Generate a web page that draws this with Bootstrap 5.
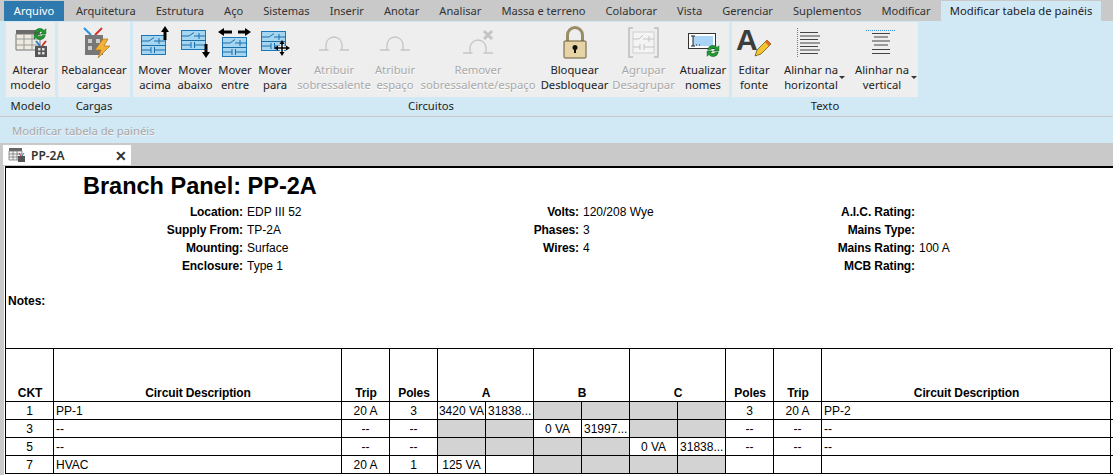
<!DOCTYPE html>
<html lang="pt">
<head>
<meta charset="utf-8">
<title>Modificar tabela de painéis</title>
<link href="https://cdn.jsdelivr.net/npm/bootstrap@5.3.0/dist/css/bootstrap.min.css" rel="stylesheet">
<style>
html,body{height:475px;overflow:hidden}
body{background:#c9c9c9;font-family:"Noto Sans","Open Sans",sans-serif;font-size:11.25px;color:#222;width:1113px}
.tabstrip{height:21px;padding:1px 0 0 4px;line-height:20px;white-space:nowrap;font-size:11.1px}
.rtab{padding:0 10px;color:#333;flex:none}
.rtab-file{background:#2e79ae;color:#fff;width:60px;text-align:center;padding:0;margin-right:2px}
.rtab-ctx{background:#d1e8f5;width:160px;padding:0;text-align:center;margin-left:auto;margin-right:12px;color:#222;font-size:11.25px}
.ribbon{height:95px;background:#d1e8f5;padding:1px 0 0 6px;gap:3px}
.rpanel{display:flex;flex-direction:column;background:#d1e8f5}
.rbtns{display:flex;height:75px;background:#eeeeee}
.rname{height:18px;line-height:18px;text-align:center;color:#222}
.rbtn{display:flex;flex-direction:column;align-items:center;text-align:center;line-height:15px;white-space:nowrap;position:relative}
.rbtn svg{display:block;height:40px;width:40px;flex:none}
.rbtn span{display:block}
.off{color:#a8a8a8;text-shadow:0 1px 0 #fff}
.caret-mark{position:absolute;right:1px;bottom:18px;width:0;height:0;border:3px solid transparent;border-top-color:#333;border-bottom:0}
.w-49px{width:49px}.w-72px{width:72px}.w-40px{width:40px}.w-78px{width:78px}.w-44px{width:44px}
.w-122px{width:122px}.w-71px{width:71px}.w-67px{width:67px}.w-52px{width:52px}.w-70px{width:70px}
.pad-2{padding-left:2px}
.rule{height:1px;background:#c9c9c9}
.ctxbar{height:26px;background:#d1e8f5;padding-left:12px;line-height:28px;color:#a8a8a8;text-shadow:0 1px 0 #f4f4f4}
.docstrip{height:23px;padding:2px 0 0 3px}
.doctab{width:128px;height:20px;background:#fff;padding:0 4px 0 5px;color:#333;line-height:21px;font-size:12px}
.doctab svg{width:18px;height:16px;flex:none}
.doctab b{font-weight:600;margin-left:5px}
.doctab i{font-style:normal;margin-left:auto;font-size:14px;font-weight:700}
.sheet{height:309px;margin-left:4px;background:#fff;padding-left:1px;overflow:hidden;font-family:"Liberation Sans",Arial,sans-serif;color:#000;font-size:12px}
.sheet-inner{border-top:2px solid #000;border-left:1px solid #000;width:1108px}
.sheet-head{height:180px}
.ptitle{font-size:23.5px;font-weight:700;margin-left:77px;line-height:26px;padding-top:5px;height:35px;color:#000}
.pgrid{display:grid;grid-template-columns:237px 99px 237px 99px 237px 99px;grid-auto-rows:18px;line-height:18px}
.pgrid b{text-align:right;letter-spacing:-.1px}
.pgrid span{padding-left:4px;white-space:nowrap}
.pnotes{font-weight:700;margin:17px 0 0 2px;line-height:18px}
.table.ptable{table-layout:fixed;border-collapse:collapse;width:1115px;max-width:none;margin:0 0 0 -1px;color:#000;--bs-table-color:#000;--bs-table-border-color:#000;--bs-table-bg:transparent}
.table.ptable>:not(caption)>*>*{padding:0 1px 0 2px;height:18px;line-height:16px;border:1px solid #000;white-space:nowrap;overflow:hidden;vertical-align:middle;color:#000;box-shadow:none}
.table.ptable>thead>tr>th{height:53px;vertical-align:bottom;text-align:center;font-weight:700;line-height:15px;letter-spacing:-.1px}
.table.ptable>tbody>tr>td.text-center{padding:0}
.table.ptable>tbody>tr>td.gc{background:#d3d3d3}
.c1{width:48px}.c2{width:288px}.c3{width:48px}.c6{width:289px}.c7{width:10px}
</style>
</head>
<body>
<svg width="0" height="0" class="d-block position-absolute">
<defs>
<symbol id="circ" viewBox="0 0 25 20">
<rect x=".5" y=".5" width="24" height="19" fill="#a6d5f2" stroke="#1a78b8"/>
<path d="M0 6H8L13 2.500M13 6H25M18 3V9M0 10.500H25M0 15H10M10 12V18M13.500 12V18M13.500 15H25" fill="none" stroke="#1a6ea8"/>
</symbol>
<symbol id="arc" viewBox="0 0 40 40">
<path d="M5 28H14.500M25.500 28H35M12 28V23A8 8 0 0 1 28 23V28" fill="none" stroke="#c6c6c6" stroke-width="1.300"/>
</symbol>
<symbol id="refresh" viewBox="0 0 12 12">
<path d="M1.500 5A4.500 4.500 0 0 1 9.500 3L11 1.500V6H6.500L8 4.500A2.500 2.500 0 0 0 4 5ZM10.500 7A4.500 4.500 0 0 1 2.500 9L1 10.500V6H5.500L4 7.500A2.500 2.500 0 0 0 8 7Z" fill="#1f9a2f" stroke="#0d5f1a" stroke-width=".5"/>
</symbol>
</defs>
</svg>

<div class="tabstrip d-flex">
<div class="rtab rtab-file">Arquivo</div>
<div class="rtab">Arquitetura</div><div class="rtab">Estrutura</div><div class="rtab">Aço</div><div class="rtab">Sistemas</div><div class="rtab">Inserir</div><div class="rtab">Anotar</div><div class="rtab">Analisar</div><div class="rtab">Massa e terreno</div><div class="rtab">Colaborar</div><div class="rtab">Vista</div><div class="rtab">Gerenciar</div><div class="rtab">Suplementos</div><div class="rtab">Modificar</div>
<div class="rtab rtab-ctx">Modificar tabela de painéis</div>
</div>

<div class="ribbon d-flex">
<div class="rpanel"><div class="rbtns">
<div class="rbtn w-49px"><svg viewBox="0 0 40 40"><rect x="5" y="8" width="24" height="4" fill="#6b6b6b"/><path d="M5 12H29V28H5Z" fill="#eeeae0" stroke="#777"/><path d="M13 12V28M21 12V28M5 17H29M5 23H29" stroke="#9a9a9a" fill="none"/><use href="#refresh" x="22" y="5" width="14" height="14"/><path d="M25 19L29 24" stroke="#2a7fd0" stroke-width="2"/><path d="M35 19L31 24" stroke="#d0302a" stroke-width="2"/><rect x="24" y="24" width="12" height="11" fill="#555"/><path d="M27 26h2.500v2.500h-2.500zM31 26h2.500v2.500h-2.500zM27 30h2.500v2.500h-2.500zM31 30h2.500v2.500h-2.500z" fill="#ddd"/></svg><span>Alterar</span><span>modelo</span></div>
</div><div class="rname">Modelo</div></div>

<div class="rpanel"><div class="rbtns">
<div class="rbtn w-72px"><svg viewBox="0 0 40 40"><path d="M10 6L17 13" stroke="#2a8fe0" stroke-width="2"/><path d="M28 6L21 13" stroke="#d9302a" stroke-width="2"/><rect x="11" y="13" width="18" height="20" fill="#777"/><path d="M14 17h4v4h-4zM22 17h4v4h-4zM14 24h4v4h-4z" fill="#ccc"/><path d="M29 17L21 28H27L24 36L36 24H30L34 17Z" fill="#f4b13a" stroke="#b3720f" stroke-width=".7"/></svg><span>Rebalancear</span><span>cargas</span></div>
</div><div class="rname">Cargas</div></div>

<div class="rpanel"><div class="rbtns pad-2">
<div class="rbtn w-40px"><svg viewBox="0 0 40 40"><use href="#circ" x="6" y="13" width="25" height="20"/><path d="M30 18V9" stroke="#000" stroke-width="3"/><path d="M26 10L30 4L34 10Z" fill="#000"/></svg><span>Mover</span><span>acima</span></div>
<div class="rbtn w-40px"><svg viewBox="0 0 40 40"><use href="#circ" x="6" y="8" width="25" height="20"/><path d="M31 22V31" stroke="#000" stroke-width="3"/><path d="M27 30L31 36L35 30Z" fill="#000"/></svg><span>Mover</span><span>abaixo</span></div>
<div class="rbtn w-40px"><svg viewBox="0 0 40 40"><use href="#circ" x="7" y="15" width="25" height="20"/><path d="M8 10H17M23 10H31" stroke="#000" stroke-width="3"/><path d="M9 6L3 10L9 14ZM30 6L36 10L30 14Z" fill="#000"/></svg><span>Mover</span><span>entre</span></div>
<div class="rbtn w-40px"><svg viewBox="0 0 40 40"><use href="#circ" x="6" y="9" width="25" height="20"/><path d="M27 20V32M21 26H33" stroke="#fff" stroke-width="3.500"/><path d="M27 21V31M22 26H32" stroke="#000" stroke-width="1.500"/><path d="M24.500 22L27 18L29.500 22ZM24.500 30L27 34L29.500 30ZM23 23.500L19 26L23 28.500ZM31 23.500L35 26L31 28.500Z" fill="#000"/></svg><span>Mover</span><span>para</span></div>
<div class="rbtn w-78px off"><svg viewBox="0 0 40 40"><use href="#arc" width="40" height="40"/></svg><span>Atribuir</span><span>sobressalente</span></div>
<div class="rbtn w-44px off"><svg viewBox="0 0 40 40"><use href="#arc" width="40" height="40"/></svg><span>Atribuir</span><span>espaço</span></div>
<div class="rbtn w-122px off"><svg viewBox="0 0 40 40"><use href="#arc" y="3" width="40" height="40"/><path d="M26 9L34 17M34 9L26 17" stroke="#c4c4c4" stroke-width="3"/></svg><span>Remover</span><span>sobressalente/espaço</span></div>
<div class="rbtn w-71px"><svg viewBox="0 0 40 40"><path d="M12.500 20V13A7.500 7.500 0 0 1 27.500 13V20" fill="none" stroke="#9a8c68" stroke-width="3"/><rect x="9" y="19" width="22" height="17" rx="1" fill="#e6d3a6" stroke="#6b5a36"/><circle cx="20" cy="25.500" r="2.500" fill="#111"/><rect x="19" y="26" width="2" height="5" fill="#111"/></svg><span>Bloquear</span><span>Desbloquear</span></div>
<div class="rbtn w-67px off"><svg viewBox="0 0 40 40"><path d="M9 6H5V35H9M30 6H34V35H30" fill="none" stroke="#bdbdbd" stroke-width="1.500"/><rect x="9" y="10" width="21" height="21" fill="#f4f4f4" stroke="#cfcfcf"/><path d="M9 17H15L19 13M19 17H30M25 14V20M9 25H16M16 22V28M20 22V28M20 25H30" fill="none" stroke="#c4c4c4"/></svg><span>Agrupar</span><span>Desagrupar</span></div>
<div class="rbtn w-52px"><svg viewBox="0 0 40 40"><rect x="5.500" y="11.500" width="27" height="15" fill="#fff" stroke="#333"/><rect x="10" y="14" width="20" height="10" fill="#a9d4f5"/><path d="M10 14V24M8 14H12M8 24H12" stroke="#222"/><path d="M13 23h1M16 23h1" stroke="#222"/><use href="#refresh" x="23" y="22" width="14" height="14"/></svg><span>Atualizar</span><span>nomes</span></div>
</div><div class="rname">Circuitos</div></div>

<div class="rpanel"><div class="rbtns">
<div class="rbtn w-44px"><svg viewBox="0 0 40 40"><text x="2" y="28" font-family="Liberation Sans,sans-serif" font-weight="700" font-size="30" fill="#3d3d3d">A</text><path d="M21 34L23 28L33 18L37 22L27 32Z" fill="#f2c531" stroke="#6b5a1a" stroke-width=".8"/><path d="M33 18L37 22L35 24L31 20Z" fill="#d9692a"/></svg><span>Editar</span><span>fonte</span></div>
<div class="rbtn w-70px"><svg viewBox="0 0 40 40"><path d="M6.500 6V35" stroke="#2a8fe0" stroke-dasharray="1 1"/><path d="M9 10.500H27M9 14H29M9 17.500H27M9 21H29M9 24.500H27M9 28H29M9 31.500H27" stroke="#444"/></svg><span>Alinhar na</span><span>horizontal</span><i class="caret-mark"></i></div>
<div class="rbtn w-72px"><svg viewBox="0 0 40 40"><path d="M4 8.500H33" stroke="#2a8fe0" stroke-dasharray="1 1"/><path d="M10 11.500H28M12 15H26M10 19H28M12 23H26M10 27.500H28M10 31.500H28" stroke="#444"/></svg><span>Alinhar na</span><span>vertical</span><i class="caret-mark"></i></div>
</div><div class="rname">Texto</div></div>
</div>

<div class="rule"></div>
<div class="ctxbar">Modificar tabela de painéis</div>

<div class="docstrip">
<div class="doctab d-flex align-items-center">
<svg viewBox="0 0 18 16"><rect x="1" y="1" width="13" height="3" fill="#666"/><path d="M1 4H14V13H1ZM5 4V13M9 4V13M1 7H14M1 10H14" fill="#f4f4f4" stroke="#777" stroke-width=".8"/><rect x="10" y="9" width="7" height="6" fill="#555"/><path d="M11 6l2 3" stroke="#d0302a"/><path d="M16 6l-2 3" stroke="#2a7fd0"/></svg>
<b>PP-2A</b><i>✕</i>
</div>
</div>

<div class="sheet">
<div class="sheet-inner">
<div class="sheet-head">
<div class="ptitle">Branch Panel: PP-2A</div>
<div class="pgrid">
<b>Location:</b><span>EDP III 52</span><b>Volts:</b><span>120/208 Wye</span><b>A.I.C. Rating:</b><span></span>
<b>Supply From:</b><span>TP-2A</span><b>Phases:</b><span>3</span><b>Mains Type:</b><span></span>
<b>Mounting:</b><span>Surface</span><b>Wires:</b><span>4</span><b>Mains Rating:</b><span>100 A</span>
<b>Enclosure:</b><span>Type 1</span><b></b><span></span><b>MCB Rating:</b><span></span>
</div>
<div class="pnotes">Notes:</div>
</div>
<table class="table ptable">
<colgroup><col class="c1"><col class="c2"><col class="c3"><col class="c3"><col class="c3"><col class="c3"><col class="c3"><col class="c3"><col class="c3"><col class="c3"><col class="c3"><col class="c3"><col class="c6"><col class="c7"></colgroup>
<thead><tr><th>CKT</th><th>Circuit Description</th><th>Trip</th><th>Poles</th><th colspan="2">A</th><th colspan="2">B</th><th colspan="2">C</th><th>Poles</th><th>Trip</th><th>Circuit Description</th><th></th></tr></thead>
<tbody>
<tr><td class="text-center">1</td><td>PP-1</td><td class="text-center">20 A</td><td class="text-center">3</td><td class="text-center">3420 VA</td><td>31838...</td><td class="gc"></td><td class="gc"></td><td class="gc"></td><td class="gc"></td><td class="text-center">3</td><td class="text-center">20 A</td><td>PP-2</td><td></td></tr>
<tr><td class="text-center">3</td><td>--</td><td class="text-center">--</td><td class="text-center">--</td><td class="gc"></td><td class="gc"></td><td class="text-center">0 VA</td><td>31997...</td><td class="gc"></td><td class="gc"></td><td class="text-center">--</td><td class="text-center">--</td><td>--</td><td></td></tr>
<tr><td class="text-center">5</td><td>--</td><td class="text-center">--</td><td class="text-center">--</td><td class="gc"></td><td class="gc"></td><td class="gc"></td><td class="gc"></td><td class="text-center">0 VA</td><td>31838...</td><td class="text-center">--</td><td class="text-center">--</td><td>--</td><td></td></tr>
<tr><td class="text-center">7</td><td>HVAC</td><td class="text-center">20 A</td><td class="text-center">1</td><td class="text-center">125 VA</td><td></td><td class="gc"></td><td class="gc"></td><td class="gc"></td><td class="gc"></td><td></td><td></td><td></td><td></td></tr>
</tbody>
</table>
</div>
</div>
<script src="https://cdn.jsdelivr.net/npm/bootstrap@5.3.0/dist/js/bootstrap.bundle.min.js"></script>
</body>
</html>
